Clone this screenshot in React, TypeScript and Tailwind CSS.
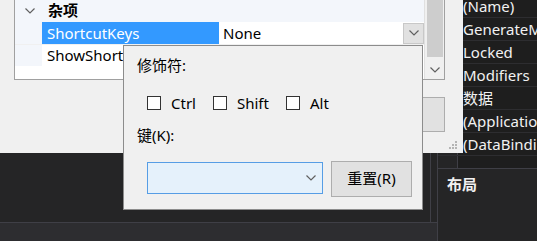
import React from "react";

const font = { fontFamily: '"Noto Sans", "Noto Sans CJK SC", sans-serif' };

const Chevron = ({ className }: { className?: string }) => (
  <svg width="10" height="6" viewBox="0 0 10 6" className={className}>
    <polyline points="0.5,0.5 5,5 9.5,0.5" fill="none" stroke="currentColor" strokeWidth="1.2" />
  </svg>
);

const darkRows = ["(Name)", "GenerateMember", "Locked", "Modifiers", "数据", "(ApplicationSettings)", "(DataBindings)", "‥"];

const Check = ({ label }: { label: string }) => (
  <div className="flex items-center">
    <span className="w-[14px] h-[14px] bg-white border border-[#333]" />
    <span className="ml-[10px] text-[15px] text-black">{label}</span>
  </div>
);

const App = () => {
  return (
    <div className="relative w-[537px] h-[241px] overflow-hidden bg-[#252526] flex" style={font}>
      {/* ide background */}
      <div className="w-[437px] shrink-0 flex flex-col">
        <div className="h-[222px] w-[431px] border-r border-[#3f3f46]" />
        <div className="flex-1 bg-[#2d2d30] border-t border-[#3f3f46]" />
      </div>
      <div className="flex-1 min-w-0 flex flex-col border-l border-[#3f3f46]">
        <div className="h-[168px] overflow-hidden">
          <div className="-mt-[5px]">
            {darkRows.map((r, i) => (
              <div key={i} className="h-[23px] flex border-b border-[#2d2d30]">
                <div className="w-[20px] shrink-0 border-r border-[#3f3f46] bg-[#252526]" />
                <div className="pl-[5px] leading-[23px] text-[15px] text-[#f1f1f1] whitespace-nowrap bg-[#1e1e1e] flex-1 overflow-hidden">
                  {r}
                </div>
              </div>
            ))}
          </div>
        </div>
        <div className="flex-1 bg-[#252526] border-t border-[#3f3f46] pl-[9px] pt-[5px] text-[15px] text-[#f1f1f1] font-bold leading-[20px]">
          布局
        </div>
      </div>

      {/* designer window */}
      <div className="absolute left-0 top-0 w-[463px] h-[153px] bg-[#f0f0f0]">
        <div className="absolute left-[14px] -top-[2px] w-[431px] h-[82px] border border-[#a0a0a0] bg-white flex">
          <div className="w-[409px] flex flex-col">
            <div className="h-[23px] flex items-center bg-[#f3f6fb]">
              <Chevron className="ml-[10px] text-[#606060]" />
              <span className="ml-[13px] text-[15px] font-bold text-black leading-none">杂项</span>
            </div>
            <div className="h-[22px] flex">
              <div className="w-[27px] bg-[#f3f6fb]" />
              <div className="w-[177px] bg-[#3399ff] text-white text-[15px] leading-[22px] pl-[5px]">ShortcutKeys</div>
              <div className="flex-1 flex items-center pl-[4px] text-[15px] text-black">
                <span className="flex-1">None</span>
                <div className="w-[21px] h-[21px] bg-[#e1e1e1] border border-[#c8c8c8] flex items-center justify-center text-[#606060]">
                  <Chevron />
                </div>
              </div>
            </div>
            <div className="h-[22px] flex border-t border-[#f0f0f0]">
              <div className="w-[27px] bg-[#f3f6fb]" />
              <div className="text-[15px] leading-[21px] pl-[5px] text-black">ShowShortcutKeys</div>
            </div>
          </div>
          <div className="flex-1 bg-[#f0f0f0] border-l border-[#e0e0e0] flex flex-col items-center">
            <div className="w-[16px] h-[58px] bg-[#cdcdcd]" />
            <div className="mt-auto mb-[6px] text-[#606060]">
              <Chevron />
            </div>
          </div>
        </div>
        <div className="absolute left-[350px] top-[97px] w-[95px] h-[35px] bg-[#e1e1e1] border border-[#adadad]" />
        <div className="absolute left-[449px] top-[141px] grid grid-cols-3 gap-[1px]">
          {[0, 0, 1, 0, 1, 1, 1, 1, 1].map((v, i) => (
            <span key={i} className={v ? "w-[2px] h-[2px] bg-[#b4b4b4]" : "w-[2px] h-[2px]"} />
          ))}
        </div>
      </div>

      {/* shortcut popup */}
      <div className="absolute left-[123px] top-[45px] w-[300px] h-[165px] bg-[#f0f0f0] border border-[#8c8c8c] text-black">
        <div className="ml-[13px] mt-[9px] text-[15px] leading-[20px]">修饰符:</div>
        <div className="flex items-center ml-[23px] mt-[17px] gap-[17px]">
          <Check label="Ctrl" />
          <Check label="Shift" />
          <Check label="Alt" />
        </div>
        <div className="ml-[13px] mt-[10px] text-[15px] leading-[20px]">键(K):</div>
        <div className="flex items-start ml-[23px] mt-[16px]">
          <div className="mt-[1px] w-[176px] h-[32px] border border-[#569de5] bg-[#e5f1fb] flex items-center justify-end pr-[6px] text-[#606060]">
            <Chevron />
          </div>
          <div className="ml-[8px] w-[81px] h-[36px] bg-[#e1e1e1] border border-[#adadad] flex items-center justify-center text-[15px]">
            重置(R)
          </div>
        </div>
      </div>
    </div>
  );
};

export default App;
